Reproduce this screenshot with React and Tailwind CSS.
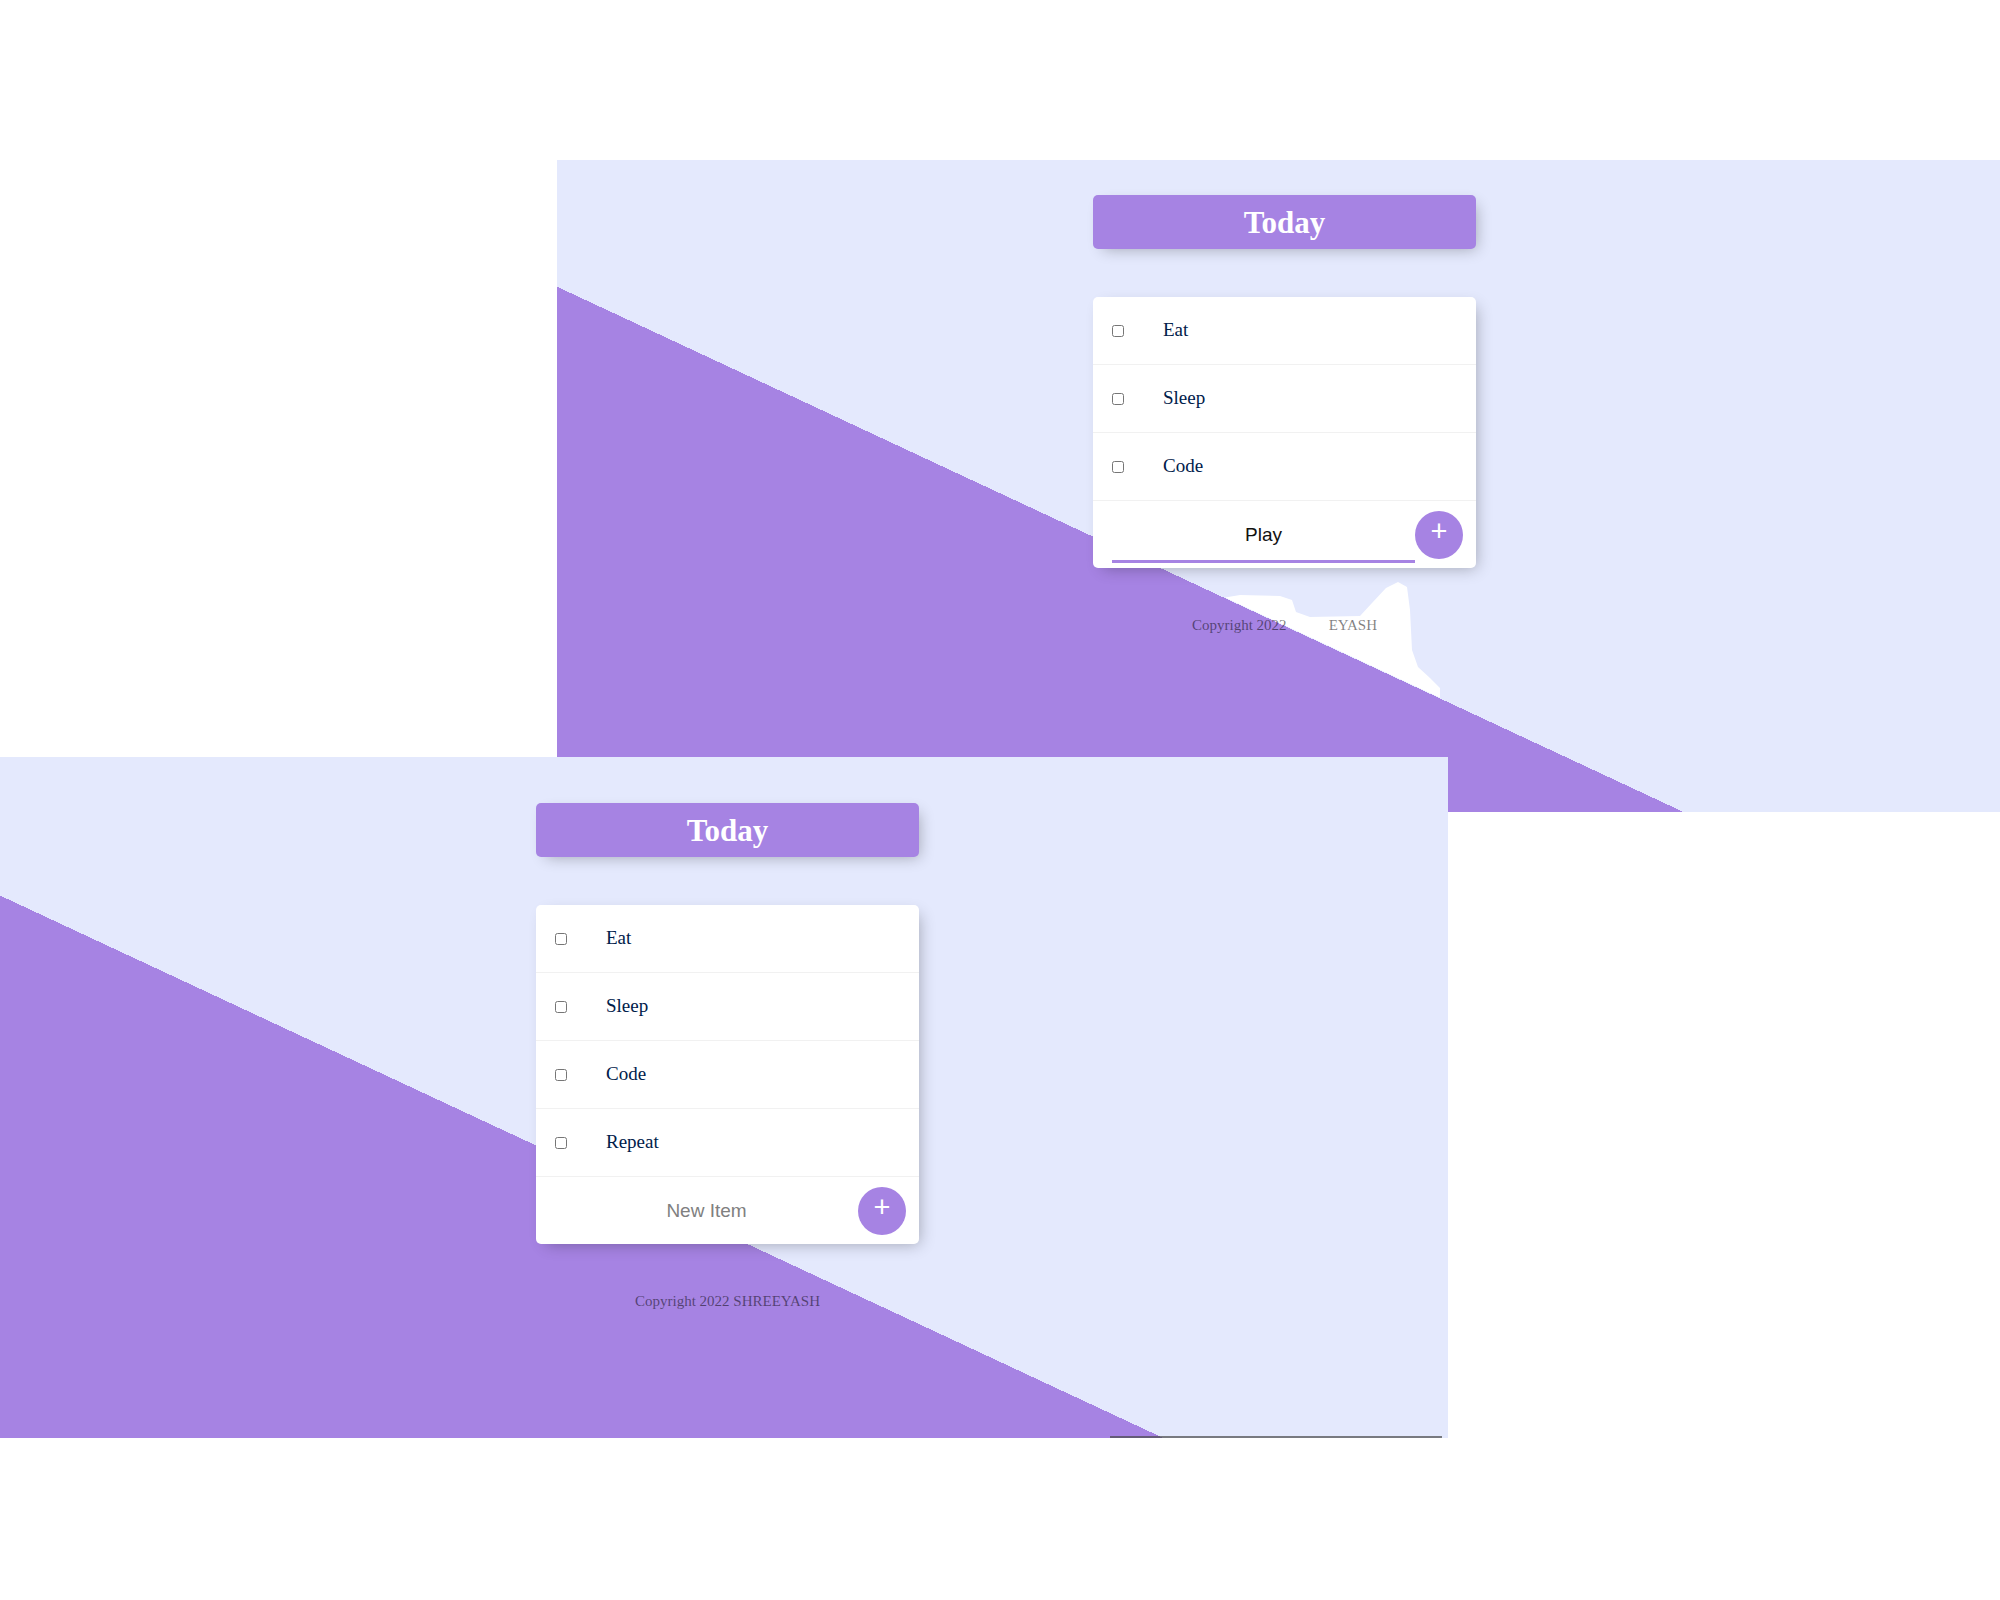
import { useState } from 'react';

const shadow = 'shadow-[5px_5px_15px_-5px_rgba(0,0,0,0.3)]';

function TodoCard({ items, draft, hideName }) {
  const [text, setText] = useState(draft);
  return (
    <div className="relative ml-[536px] w-[383px]">
      <div className={`flex h-[54px] items-center justify-center rounded-[5px] bg-[#A683E3] ${shadow}`}>
        <h1 className="font-['Liberation_Serif',serif] text-[31px] font-bold leading-none text-white">Today</h1>
      </div>

      <div className={`mt-[48px] rounded-[5px] bg-white ${shadow}`}>
        {items.map((item) => (
          <div key={item} className="flex h-[68px] items-center border-b border-[#F1F1F1]">
            <input type="checkbox" className="ml-[19px] h-3 w-3 shrink-0" />
            <p className="ml-[39px] font-['Liberation_Serif',serif] text-[19px] text-[#00204a]">{item}</p>
          </div>
        ))}
        <form className="flex h-[67px] items-center pl-[19px]" onSubmit={(e) => e.preventDefault()}>
          <input
            type="text"
            value={text}
            onChange={(e) => setText(e.target.value)}
            placeholder="New Item"
            className={`h-[57px] w-[303px] bg-transparent text-center font-['Liberation_Sans',Arial,sans-serif] text-[19px] text-[#111] outline-none placeholder:text-[#808080] ${text ? 'shadow-[inset_0_-3px_0_0_#A683E3]' : ''}`}
          />
          <button
            type="submit"
            className="flex h-12 w-12 shrink-0 items-center justify-center rounded-full bg-[#A683E3] pb-[6px] font-['Liberation_Sans',Arial,sans-serif] text-[29px] leading-none text-white"
          >
            +
          </button>
        </form>
      </div>

      <footer className="mt-[49px] text-center font-['Liberation_Serif',serif] text-[15px] leading-[17px] text-black/50">
        Copyright 2022 {hideName ? <><span className="text-transparent">SHRE</span>EYASH</> : 'SHREEYASH'}
      </footer>
    </div>
  );
}

export default function App() {
  return (
    <div className="min-h-[1600px] w-[2000px] overflow-hidden bg-white pt-[160px]">
      {/* back screenshot */}
      <div className="relative ml-[557px] h-[652px] w-[1443px] bg-[linear-gradient(25deg,#A683E3_39.65%,#E4E9FD_39.65%)] pt-[35px]">
        <svg className="absolute inset-0" width="1443" height="652">
          <polygon
            fill="#ffffff"
            points="668,437.5 683,435 723,436 735,440 739,452 753,457 803,456 815,443 829,428 841,422 850,427 853,450 855,490 861,507 873,518 883,528 883,537.7"
          />
        </svg>
        <TodoCard items={['Eat', 'Sleep', 'Code']} draft="Play" hideName />
      </div>

      {/* front screenshot */}
      <div className="relative -mt-[55px] h-[681px] w-[1448px] bg-[linear-gradient(25deg,#A683E3_40%,#E4E9FD_40%)] pt-[46px]">
        <TodoCard items={['Eat', 'Sleep', 'Code', 'Repeat']} draft="" />
        <div className="absolute bottom-0 left-[1110px] h-[2px] w-[332px] bg-[#4a4a4a]/70" />
      </div>
    </div>
  );
}
